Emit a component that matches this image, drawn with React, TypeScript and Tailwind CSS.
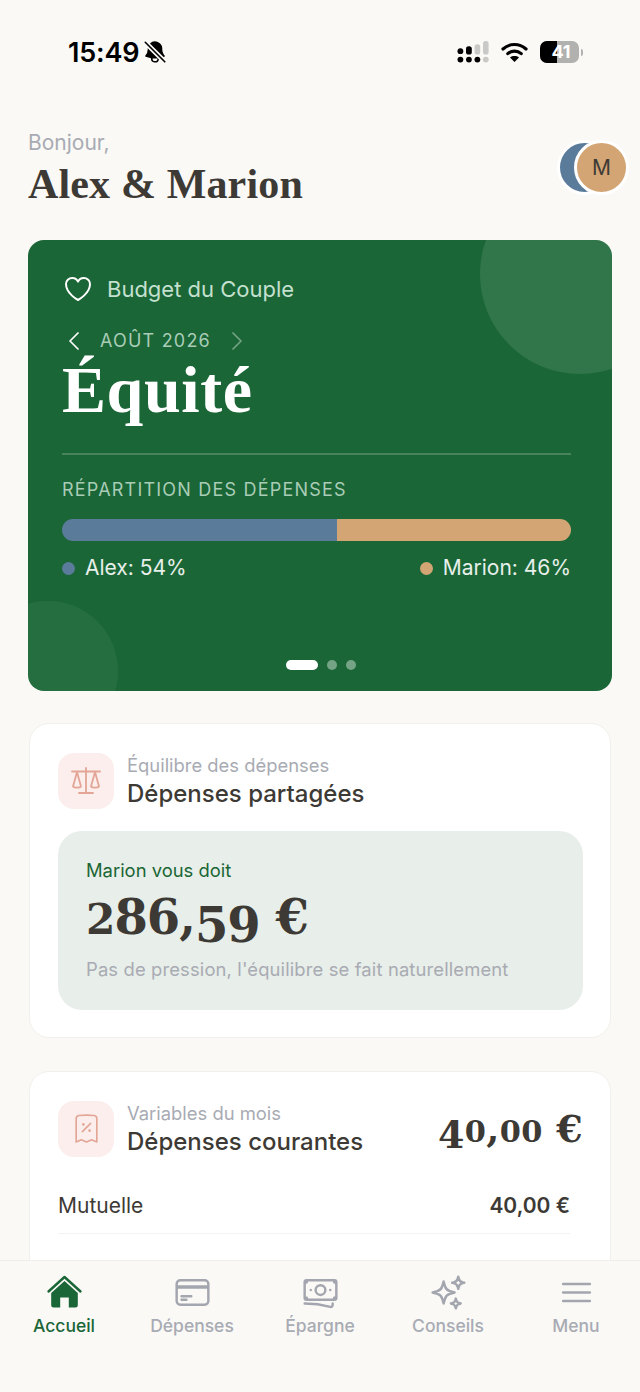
import React from 'react';
import {
  HiBellSlash,
  HiOutlineBanknotes,
  HiOutlineBars3,
  HiOutlineCreditCard,
  HiOutlineHeart,
  HiOutlineReceiptPercent,
  HiOutlineSparkles,
} from 'react-icons/hi2';
import { ChevronLeft, ChevronRight } from 'lucide-react';

const sans = "font-['Inter','Liberation_Sans',sans-serif]";
const serif = "font-['Liberation_Serif',serif]";
const numeric = "font-['DejaVu_Serif',serif]";

const SignalIcon = () => (
  <svg width="32" height="22" viewBox="0 0 32 22" className="block">
    <g fill="#000">
      <circle cx="3.4" cy="10.2" r="2.9" />
      <rect x="9" y="5.3" width="5.8" height="8.3" rx="2.6" />
      <circle cx="3.4" cy="18.6" r="2.9" />
      <circle cx="11.9" cy="18.6" r="2.9" />
      <circle cx="20.4" cy="18.6" r="2.9" />
    </g>
    <g fill="#c9c9c7">
      <rect x="17.6" y="3.2" width="5.6" height="10.4" rx="2.6" />
      <rect x="26" y="0" width="5.6" height="13.6" rx="2.6" />
      <circle cx="28.8" cy="18.6" r="2.9" />
    </g>
  </svg>
);

const WifiIcon = () => (
  <svg width="27" height="20" viewBox="0 0 27 20" className="block">
    <path d="M2 7C8.8 1 18.2 1 25 7" fill="none" stroke="#000" strokeWidth="3.2" strokeLinecap="round" />
    <path d="M6.8 11.6C10.6 8.4 16.4 8.4 20.2 11.6" fill="none" stroke="#000" strokeWidth="3.2" strokeLinecap="round" />
    <path d="M13.5 20L9 15.4C11.4 13.6 15.6 13.6 18 15.4Z" fill="#000" />
  </svg>
);

const Battery = () => (
  <div className="flex items-center gap-[2px]">
    <div className="relative flex h-[22px] w-[39px] items-center justify-center overflow-hidden rounded-[7px] bg-[#b1b1af]">
      <div className="absolute inset-y-0 left-0 w-[17px] bg-black" />
      <span className={`relative pl-[3px] text-[18px] font-bold leading-none text-white ${sans}`}>41</span>
    </div>
    <div className="h-[7px] w-[2px] rounded-r-full bg-[#b1b1af]" />
  </div>
);

const StatusBar = () => (
  <div className="flex h-[104px] items-center justify-between pl-[68px] pr-[57px]">
    <div className="flex items-center gap-[3px]">
      <span className={`text-[27px] font-semibold leading-none tracking-[-0.2px] text-black ${sans}`}>15:49</span>
      <HiBellSlash className="h-[26px] w-[26px] text-black" />
    </div>
    <div className="flex items-center gap-[12px]">
      <SignalIcon />
      <WifiIcon />
      <Battery />
    </div>
  </div>
);

const Greeting = () => (
  <div className="flex items-start justify-between px-[28px] pt-[25px]">
    <div>
      <div className={`text-[21px] leading-[28px] text-[#a8abb3] ${sans}`}>Bonjour,</div>
      <div className={`mt-[3px] text-[42px] font-bold leading-[48px] tracking-[0.15px] text-[#3d3a35] ${serif}`}>Alex &amp; Marion</div>
    </div>
    <div className="mr-[-17px] mt-[11px] flex">
      <div className="h-[55px] w-[55px] rounded-full border-[3px] border-white bg-[#5b7b9a]" />
      <div className={`ml-[-38px] flex h-[55px] w-[55px] items-center justify-center rounded-full border-[3px] border-white bg-[#d4a574] text-[21px] text-[#3d3a35] ${sans}`}>
        M
      </div>
    </div>
  </div>
);

// the amounts use old-style figures: small 0/1/2, descending 3/4/5/7/9
const Amount = ({ value }: { value: string }) => (
  <>
    {value.split('').map((c, i) => {
      if (c === '2') return <span key={i} className="text-[0.88em] leading-none">{c}</span>;
      if ('01'.includes(c)) return <span key={i} className="text-[0.8em] leading-none">{c}</span>;
      if ('34579'.includes(c)) return <span key={i} className="align-[-0.17em] leading-none">{c}</span>;
      return <span key={i} className="leading-none">{c}</span>;
    })}
  </>
);

const HeroCard = () => (
  <section className={`relative mx-[28px] mt-[32px] h-[451px] overflow-hidden rounded-[16px] bg-[#1a6636] pl-[34px] pr-[41px] pt-[33px] ${sans}`}>
    <div className="absolute right-[-68px] top-[-66px] h-[200px] w-[200px] rounded-full bg-white/10" />
    <div className="absolute bottom-[-50px] left-[-50px] h-[140px] w-[140px] rounded-full bg-white/5" />
    <div className="relative">
      <div className="flex items-center gap-[13px]">
        <HiOutlineHeart className="h-[32px] w-[32px] text-white" />
        <span className="text-[22px] leading-[30px] text-[#c4e0cf]">Budget du Couple</span>
      </div>
      <div className="ml-[-4px] mt-[21px] flex h-[30px] items-center">
        <ChevronLeft className="h-[32px] w-[32px] text-white" strokeWidth={1.3} />
        <span className="ml-[10px] text-[18px] leading-[26px] tracking-[1.2px] text-[#a9ccb6]">AOÛT 2026</span>
        <ChevronRight className="ml-[10px] h-[32px] w-[32px] text-white/40" strokeWidth={1.3} />
      </div>
      <h1 className={`mt-[-2px] text-[66px] font-bold leading-[72px] tracking-[0.6px] text-white ${serif}`}>Équité</h1>
      <div className="mt-[27px] h-[2px] bg-white/20" />
      <div className="mt-[23px] text-[18px] leading-[24px] tracking-[1.2px] text-[#a9ccb6]">RÉPARTITION DES DÉPENSES</div>
      <div className="mt-[17px] flex h-[22px] overflow-hidden rounded-full">
        <div className="w-[54%] bg-[#5b7b9a]" />
        <div className="w-[46%] bg-[#d4a574]" />
      </div>
      <div className="mt-[13px] flex justify-between text-[21px] leading-[28px] text-white/90">
        <div className="flex items-center gap-[10px]">
          <span className="h-[13px] w-[13px] rounded-full bg-[#5b7b9a]" />
          Alex: 54%
        </div>
        <div className="flex items-center gap-[10px]">
          <span className="h-[13px] w-[13px] rounded-full bg-[#d4a574]" />
          Marion: 46%
        </div>
      </div>
    </div>
    <div className="absolute bottom-[21px] left-0 right-0 flex items-center justify-center gap-[9px] pl-[1px]">
      <span className="h-[10px] w-[32px] rounded-full bg-white" />
      <span className="h-[10px] w-[10px] rounded-full bg-white/40" />
      <span className="h-[10px] w-[10px] rounded-full bg-white/40" />
    </div>
  </section>
);

const ScaleIcon = () => (
  <svg width="56" height="56" viewBox="0 0 56 56" fill="none" stroke="currentColor" strokeWidth="1.8" strokeLinecap="round" strokeLinejoin="round">
    <path d="M14 18.5H42" />
    <path d="M28 15V40" />
    <path d="M21 40H35" />
    <path d="M19 19L15 33.5C16 35 22 35 23 33.5Z" />
    <path d="M37 19L33 33.5C34 35 40 35 41 33.5Z" />
  </svg>
);

const CardHeader = ({ icon, sub, title }: { icon: React.ReactNode; sub: string; title: string }) => (
  <div className="flex items-center gap-[13px]">
    <div className="flex h-[56px] w-[56px] items-center justify-center rounded-[16px] bg-[#fbeeec] text-[#e3a595]">{icon}</div>
    <div className="pt-[1px]">
      <div className="text-[18.4px] leading-[24px] text-[#a8abb3]">{sub}</div>
      <div className="mt-[2px] text-[24px] font-medium leading-[30px] text-[#3d3a35]">{title}</div>
    </div>
  </div>
);

const BalanceCard = () => (
  <section className={`mx-[29px] mt-[32px] h-[315px] rounded-[20px] border border-[#f1f0ec] bg-white pl-[28px] pr-[27px] pt-[28px] ${sans}`}>
    <CardHeader icon={<ScaleIcon />} sub="Équilibre des dépenses" title="Dépenses partagées" />
    <div className="mt-[22px] h-[179px] rounded-[24px] bg-[#e8eee9] px-[28px] pt-[27px]">
      <div className="text-[18.4px] leading-[24px] text-[#1a6636]">Marion vous doit</div>
      <div className={`mt-[3px] h-[64px] text-[48px] font-bold leading-[64px] tracking-[-1px] text-[#3d3a35] ${numeric}`}>
        <Amount value="286,59 €" />
      </div>
      <div className="mt-[8px] text-[18.4px] leading-[24px] tracking-[0.14px] text-[#a8abb3]">Pas de pression, l'équilibre se fait naturellement</div>
    </div>
  </section>
);

const ExpensesCard = () => (
  <section className={`mx-[29px] mt-[33px] rounded-[20px] border border-[#f1f0ec] bg-white pb-[60px] pl-[28px] pr-[27px] pt-[28px] ${sans}`}>
    <div className="flex items-center justify-between">
      <CardHeader icon={<HiOutlineReceiptPercent className="h-[33px] w-[33px]" strokeWidth={1.2} />} sub="Variables du mois" title="Dépenses courantes" />
      <div className={`h-[48px] text-[38px] font-bold leading-[48px] tracking-[0.3px] text-[#3d3a35] ${numeric}`}>
        <Amount value="40,00 €" />
      </div>
    </div>
    <div className="mr-[13px] mt-[21px] flex h-[56px] items-center justify-between border-b border-[#f3f3f0] text-[21px] text-[#3d3a35]">
      <span>Mutuelle</span>
      <span className="font-semibold">40,00 €</span>
    </div>
  </section>
);

const HomeIcon = ({ className }: { className?: string }) => (
  <svg viewBox="0 0 39 39" className={className}>
    <path d="M3.5 18.5L19.5 4L35.5 18.5" fill="none" stroke="currentColor" strokeWidth="2.4" strokeLinecap="round" strokeLinejoin="round" />
    <path d="M19.5 8L32.8 20V32A2.5 2.5 0 0 1 30.3 34.5H23.8V24.5H15.2V34.5H8.7A2.5 2.5 0 0 1 6.2 32V20Z" fill="currentColor" />
  </svg>
);

const tabs = [
  { label: 'Accueil', Icon: HomeIcon, active: true },
  { label: 'Dépenses', Icon: HiOutlineCreditCard },
  { label: 'Épargne', Icon: HiOutlineBanknotes },
  { label: 'Conseils', Icon: HiOutlineSparkles },
  { label: 'Menu', Icon: HiOutlineBars3 },
];

const BottomNav = () => (
  <nav className={`flex h-[132px] shrink-0 border-t border-[#efeeea] bg-[#faf9f6] pt-[12px] ${sans}`}>
    {tabs.map(({ label, Icon, active }) => (
      <div key={label} className="flex w-[128px] flex-col items-center">
        <Icon className={`h-[39px] w-[39px] ${active ? 'text-[#1a6636]' : 'text-[#a3a6ae]'}`} />
        <span className={`mt-[2px] text-[17.5px] font-medium leading-[24px] ${active ? 'text-[#1a6636]' : 'text-[#a8abb3]'}`}>{label}</span>
      </div>
    ))}
  </nav>
);

export default function App() {
  return (
    <div className="flex h-[1392px] w-[640px] flex-col overflow-hidden bg-[#faf9f6]">
      <main className="min-h-0 flex-1 overflow-hidden">
        <StatusBar />
        <Greeting />
        <HeroCard />
        <BalanceCard />
        <ExpensesCard />
      </main>
      <BottomNav />
    </div>
  );
}
